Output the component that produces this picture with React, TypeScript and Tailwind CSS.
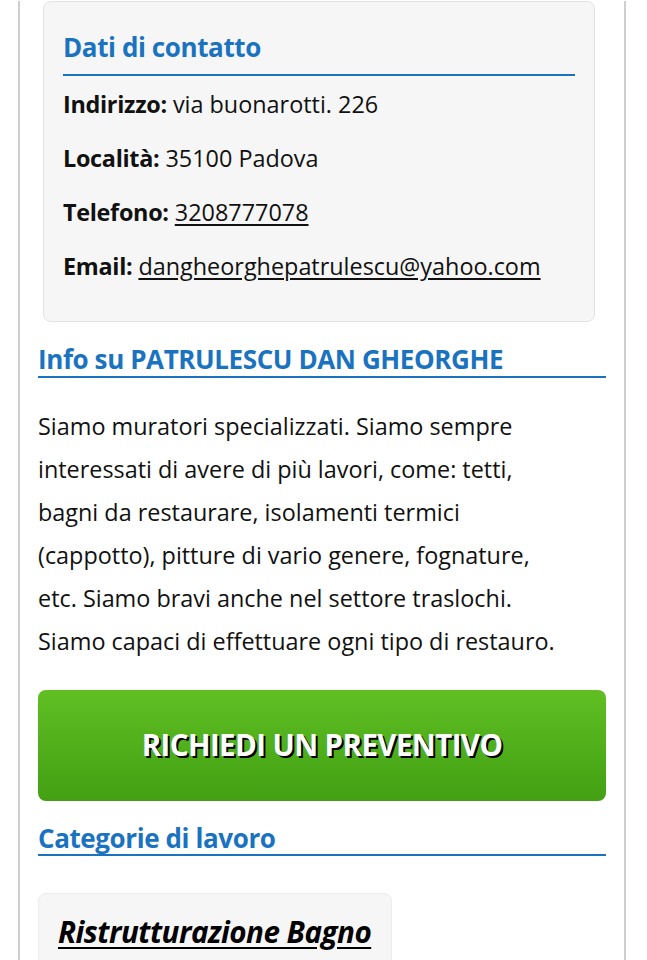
export default function App() {
  const rows = [
    { label: "Indirizzo:", value: "via buonarotti. 226", link: false },
    { label: "Località:", value: "35100 Padova", link: false },
    { label: "Telefono:", value: "3208777078", link: true },
    { label: "Email:", value: "dangheorghepatrulescu@yahoo.com", link: true },
  ];

  return (
    <div className="min-h-screen bg-white font-['Open_Sans',sans-serif] text-[#111]">
      <div className="mx-[18px] w-[608px] min-h-[960px] border-x-2 border-[#cfcfcf] px-[18px]">
        {/* Contact box */}
        <div className="ml-[5px] mr-[11px] mt-[1px] rounded-lg border border-[#e2e2e2] bg-[#f6f6f6] px-[19px] pb-[40px] pt-[28px]">
          <h2 className="border-b-2 border-[#1a73c0] pb-[10px] text-[26px] font-bold leading-[34px] tracking-[-0.4px] text-[#1a73c0]">
            Dati di contatto
          </h2>
          <div className="mt-[13px] flex flex-col gap-[24px]">
            {rows.map((r) => (
              <p key={r.label} className="text-[23.4px] leading-[30px]">
                <span className="font-bold tracking-[-0.3px]">{r.label}</span>{" "}
                {r.link ? <a className="underline underline-offset-[3px]" href="#">{r.value}</a> : r.value}
              </p>
            ))}
          </div>
        </div>

        {/* Info */}
        <h2 className="mt-[21px] border-b-2 border-[#1a73c0] pb-[1px] text-[26px] font-bold leading-[32px] tracking-[-0.4px] text-[#1a73c0]">
          Info su PATRULESCU DAN GHEORGHE
        </h2>
        <p className="mt-[27px] max-w-[530px] text-[23.4px] leading-[43px]">
          Siamo muratori specializzati. Siamo sempre interessati di avere di più lavori, come: tetti, bagni da restaurare, isolamenti termici (cappotto), pitture di vario genere, fognature, etc. Siamo bravi anche nel settore traslochi. Siamo capaci di effettuare ogni tipo di restauro.
        </p>

        <button className="mt-[27px] flex h-[111px] w-full items-center justify-center rounded-lg bg-gradient-to-b from-[#5fbf22] to-[#42a013] text-[29.5px] font-bold tracking-[-0.6px] text-white [text-shadow:2px_2px_0_#000]">
          RICHIEDI UN PREVENTIVO
        </button>

        <h2 className="mt-[21px] border-b-2 border-[#1a73c0] pb-[0px] text-[26px] font-bold leading-[32px] tracking-[-0.4px] text-[#1a73c0]">
          Categorie di lavoro
        </h2>

        <div className="mt-[37px] w-[354px] rounded-t-lg border border-[#ececec] bg-[#f6f6f6] px-[19px] pt-[20px] pb-[20px]">
          <a href="#" className="text-[29.6px] font-bold italic leading-[36px] tracking-[-0.5px] text-black underline underline-offset-[4px]">
            Ristrutturazione Bagno
          </a>
        </div>
      </div>
    </div>
  );
}
